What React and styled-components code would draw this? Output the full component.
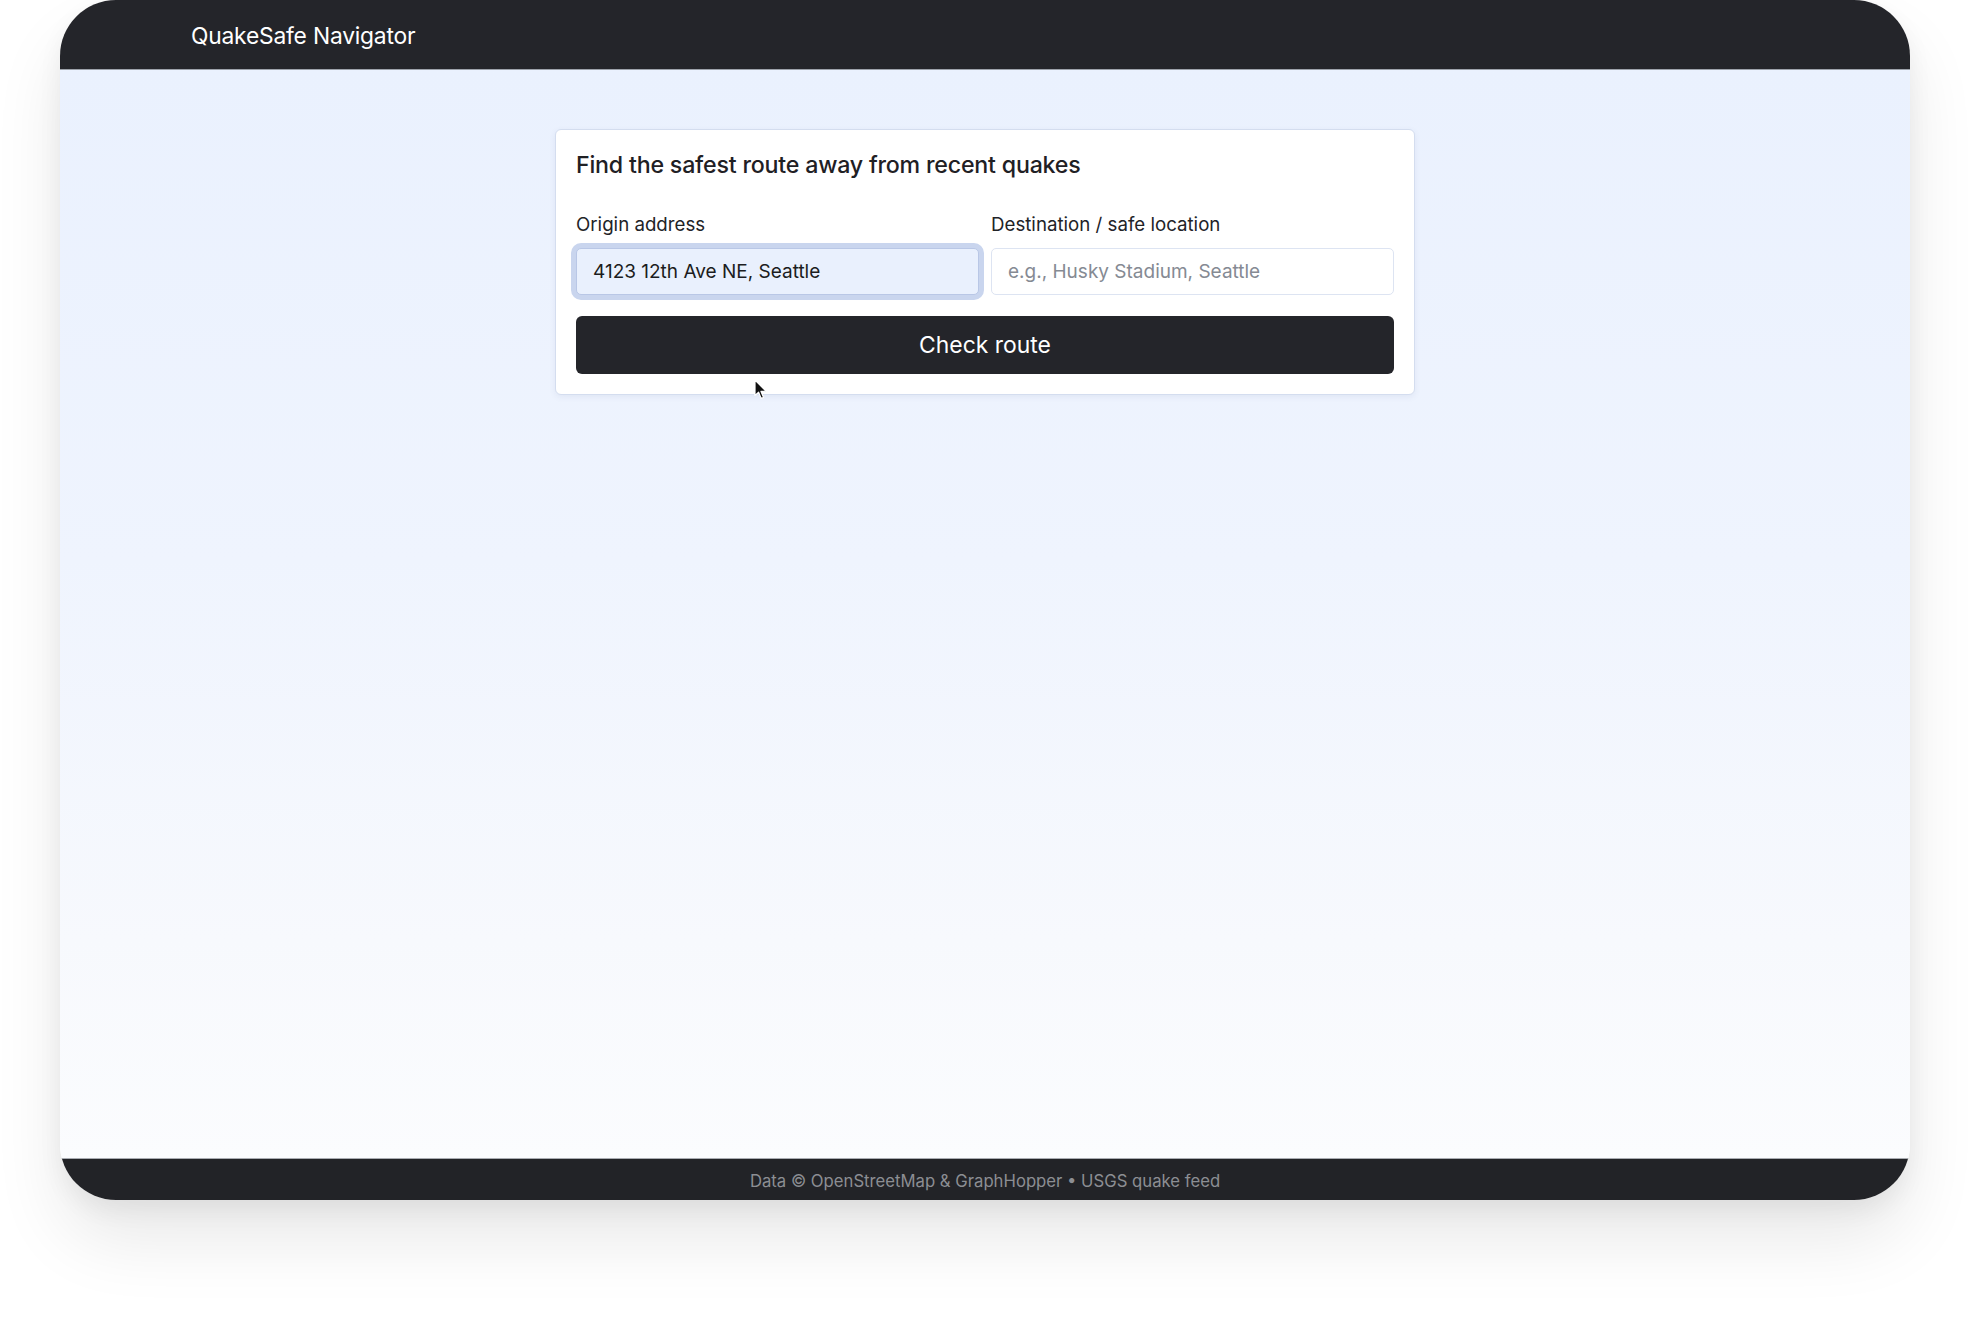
import React from "react"
import styled, { createGlobalStyle } from "styled-components"

const GlobalStyle = createGlobalStyle`
  * {
    box-sizing: border-box;
  }
  body {
    margin: 0;
    background: #ffffff;
    font-family: Inter, "Noto Sans", "Liberation Sans", sans-serif;
    -webkit-font-smoothing: antialiased;
  }
`

const Page = styled.div`
  width: 1970px;
  height: 1320px;
  padding: 0 60px;
  background: #ffffff;
`
const Frame = styled.div`
  display: flex;
  flex-direction: column;
  width: 1850px;
  height: 1200px;
  border-radius: 56px;
  overflow: hidden;
  box-shadow: 0 40px 70px rgba(0, 0, 0, 0.09), 0 10px 24px rgba(0, 0, 0, 0.06);
`
const Header = styled.header`
  display: flex;
  align-items: center;
  height: 70px;
  padding: 2px 131px 0;
  background: #24252a;
  border-bottom: 1px solid #9da2aa;
`
const Brand = styled.div`
  color: #ffffff;
  font-size: 22.8px;
  font-weight: 400;
  letter-spacing: -0.2px;
`
const Main = styled.main`
  flex: 1;
  display: flex;
  flex-direction: column;
  align-items: center;
  padding-top: 59px;
  background: linear-gradient(180deg, #eaf1fe 0%, #eff4fe 45%, #f7f9fd 80%, #fbfcfe 100%);
`
const Card = styled.section`
  position: relative;
  width: 860px;
  padding: 19px 20px 20px;
  background: #ffffff;
  border: 1px solid #d4ddef;
  border-radius: 6px;
  box-shadow: 0 2px 6px rgba(60, 80, 130, 0.08);
`
const Title = styled.h2`
  margin: 0 0 32px;
  color: #1f2024;
  font-size: 23.2px;
  line-height: 32px;
  font-weight: 500;
  letter-spacing: -0.2px;
`
const Fields = styled.div`
  display: grid;
  grid-template-columns: 1fr 1fr;
  gap: 12px;
`
const Field = styled.label`
  display: flex;
  flex-direction: column;
  gap: 11px;
`
const LabelText = styled.span`
  color: #222327;
  font-size: 18.7px;
  line-height: 24px;
`
const Input = styled.input`
  width: 100%;
  height: 47px;
  padding: 0 16px;
  font-family: inherit;
  font-size: 19px;
  color: #1b1c20;
  background: ${(p) => (p.$focused ? "#e9f0fd" : "#ffffff")};
  border: 1px solid ${(p) => (p.$focused ? "#b9c7e6" : "#dde4f2")};
  border-radius: 5px;
  box-shadow: ${(p) => (p.$focused ? "0 0 0 5px #c9d5ee" : "none")};
  outline: none;

  &::placeholder {
    color: #858a93;
  }
`
const Button = styled.button`
  width: 100%;
  height: 58px;
  margin-top: 21px;
  border: none;
  border-radius: 6px;
  background: #24252a;
  color: #ffffff;
  font-family: inherit;
  font-size: 22.9px;
  font-weight: 400;
  cursor: pointer;
`
const Pointer = styled.svg`
  position: absolute;
  left: 198px;
  top: 249px;
  width: 14px;
  height: 21px;
`
const Footer = styled.footer`
  display: flex;
  align-items: center;
  justify-content: center;
  height: 42px;
  padding-top: 2px;
  background: #222327;
  border-top: 1px solid #a9acb2;
  color: #8c8e93;
  font-size: 16.7px;
`

export default function App() {
  const [origin, setOrigin] = React.useState("4123 12th Ave NE, Seattle")
  const [destination, setDestination] = React.useState("")

  return (
    <Page>
      <GlobalStyle />
      <Frame>
        <Header>
          <Brand>QuakeSafe Navigator</Brand>
        </Header>
        <Main>
          <Card>
            <Title>Find the safest route away from recent quakes</Title>
            <Fields>
              <Field>
                <LabelText>Origin address</LabelText>
                <Input
                  $focused
                  value={origin}
                  onChange={(e) => setOrigin(e.target.value)}
                />
              </Field>
              <Field>
                <LabelText>Destination / safe location</LabelText>
                <Input
                  placeholder="e.g., Husky Stadium, Seattle"
                  value={destination}
                  onChange={(e) => setDestination(e.target.value)}
                />
              </Field>
            </Fields>
            <Button>Check route</Button>
            <Pointer viewBox="0 0 14 21">
              <path
                d="M1 1 L1 16.5 L4.6 13.2 L7.2 19.4 L9.6 18.4 L7 12.4 L12 12.2 Z"
                fill="#111"
                stroke="#fff"
                strokeWidth="1.2"
                strokeLinejoin="round"
              />
            </Pointer>
          </Card>
        </Main>
        <Footer>Data © OpenStreetMap &amp; GraphHopper • USGS quake feed</Footer>
      </Frame>
    </Page>
  )
}
